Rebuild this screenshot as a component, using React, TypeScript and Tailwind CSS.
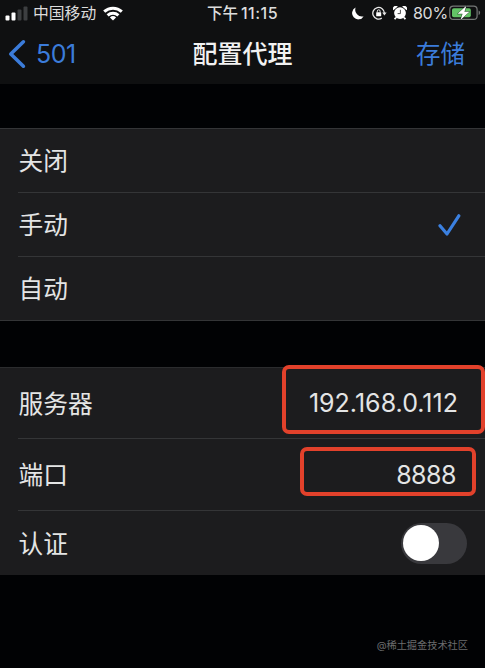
import type { ReactNode } from 'react';
import clsx from 'clsx';

const modes = ['关闭', '手动', '自动'];

function StatusBar() {
  return (
    <div className="relative flex h-[26px] items-center text-[15.5px] text-[#dcdcdc]">
      <svg className="ml-[5px] h-[15px] w-[23px]" viewBox="0 0 23 15">
        <rect x="0.5" y="9.5" width="4" height="5" rx="1" fill="#fff" />
        <rect x="6.5" y="6.5" width="4" height="8" rx="1" fill="#fff" />
        <rect x="12.5" y="3.5" width="4" height="11" rx="1" fill="#3d3f41" />
        <rect x="18.5" y="0.5" width="4" height="14" rx="1" fill="#3d3f41" />
      </svg>
      <span className="ml-[5px] pt-[2px] text-[15.8px] leading-none">中国移动</span>
      <svg className="ml-[7px] h-[15px] w-5" viewBox="0 0 20 15" fill="none" stroke="#fff" strokeWidth="3">
        <path d="M1.2 5.7a12.8 12.8 0 0 1 17.6 0" />
        <path d="M4.6 9.3a8 8 0 0 1 10.8 0" />
        <path d="M10 14.6 6.9 11.5a4.5 4.5 0 0 1 6.2 0z" fill="#fff" stroke="none" />
      </svg>

      <div className="absolute inset-x-0 flex items-center justify-center gap-[3px] leading-none font-medium">
        <span className="pt-[2px]">下午</span>
        <span className="text-base tracking-[0.5px]">11:15</span>
      </div>

      <div className="ml-auto flex items-center">
        <svg className="h-[13px] w-[13px]" viewBox="0 0 13 13" fill="#fff">
          <path d="M4.6.6A6.2 6.2 0 1 0 12.6 9.4 6.8 6.8 0 0 1 4.6.6z" />
        </svg>
        <svg className="ml-2 h-3.5 w-[15px]" viewBox="0 0 15 14" fill="none" stroke="#e8e8e8" strokeWidth="1.3">
          <path d="M9.8 12.1A5.8 5.8 0 1 1 12.4 7" />
          <path d="M10.2 6.4h4.4l-2.2 3z" fill="#e8e8e8" stroke="none" />
          <rect x="4.2" y="6.2" width="5" height="4" rx="0.5" fill="#fff" stroke="none" />
          <path d="M5.3 6.5V5.2a1.4 1.4 0 0 1 2.8 0v1.3" strokeWidth="1" />
        </svg>
        <svg className="ml-[6px] h-3.5 w-3.5" viewBox="0 0 14 14">
          <path d="M.4 4.2A2.9 2.9 0 0 1 4.8.5zM13.6 4.2A2.9 2.9 0 0 0 9.2.5z" fill="#fff" />
          <circle cx="7" cy="7.1" r="5.9" fill="#fff" />
          <path d="m3 11.5-1.4 1.8M11 11.5l1.4 1.8" stroke="#fff" strokeWidth="1.8" />
          <path d="M7.4 3.8v3.8H4.6" fill="none" stroke="#3a3a3a" strokeWidth="0.9" />
        </svg>
        <span className="ml-[6px] w-[34px] text-[16px] leading-none tracking-[-0.3px] whitespace-nowrap">80%</span>
        <svg className="mr-[4px] ml-[2px] h-4 w-[32px]" viewBox="0 0 32 16">
          <rect x="0.8" y="1.1" width="27.3" height="13.3" rx="3.5" fill="none" stroke="#757877" strokeWidth="1.2" />
          <rect x="3" y="3.2" width="18.8" height="9.1" rx="1.8" fill="#63c466" />
          <path d="M29.6 5.5v4.6q1.5-.5 1.5-2.3t-1.5-2.3z" fill="#757877" />
          <path
            d="M17.4.8 8.6 8.8h5L11.4 15l9-8.2h-5z"
            fill="#fff"
            stroke="#17231a"
            strokeWidth="0.8"
            paintOrder="stroke"
          />
        </svg>
      </div>
    </div>
  );
}

function NavBar() {
  return (
    <div className="relative flex h-14 items-center justify-between pr-5 pl-2 text-[#3b7cda]">
      <button className="flex items-center">
        <svg className="h-[30px] w-[19px]" viewBox="0 0 19 30" fill="none" stroke="currentColor" strokeWidth="3.6">
          <path d="M15.4 2.8 2.8 15l12.6 12.2" strokeLinecap="round" strokeLinejoin="round" />
        </svg>
        <span className="ml-[9px] text-[25px] leading-none tracking-[-0.5px]">501</span>
      </button>
      <h1 className="pointer-events-none absolute inset-x-0 pt-px text-center text-[25px] leading-none font-medium text-[#f2f2f2]">
        配置代理
      </h1>
      <button className="pt-px text-[24.5px] leading-none">存储</button>
    </div>
  );
}

function Row({ label, className, children }: { label: string; className: string; children?: ReactNode }) {
  return (
    <div className={clsx('ml-[18px] flex items-center justify-between', className)}>
      <span className="pt-[2px] pl-[0.5px] leading-none">{label}</span>
      {children}
    </div>
  );
}

export default function App() {
  return (
    <main className="h-[668px] w-[485px] overflow-hidden bg-[#010204] font-['Inter','Noto_Sans_CJK_SC',sans-serif] text-[24.7px] text-[#e4e5e5]">
      <header className="h-[84px] bg-[#0f1011]">
        <StatusBar />
        <NavBar />
      </header>

      <section className="mt-11 border-y border-[#343537] bg-[#1c1c1e]">
        {modes.map((mode, i) => (
          <Row
            key={mode}
            label={mode}
            className={clsx(i === 0 ? 'h-[63px]' : 'h-16 border-t border-[#343537]')}
          >
            {mode === '手动' && (
              <svg className="mr-6 h-6 w-[23px]" viewBox="0 0 23 24" fill="none" stroke="#3b80e0" strokeWidth="3.2">
                <path d="m2 12.8 7 8.2L20.8 2.8" strokeLinecap="round" strokeLinejoin="round" />
              </svg>
            )}
          </Row>
        ))}
      </section>

      <section className="mt-[46px] border-t border-[#2b2c2e] bg-[#1c1c1e]">
        <Row label="服务器" className="h-[70px]">
          <div className="-mt-[7px] flex h-[69px] w-[203px] items-center justify-end rounded-[7px] border-4 border-[#e2412b] pt-[7px] pr-[23px]">
            <span className="text-[25px] leading-none tracking-[0.02px]">192.168.0.112</span>
          </div>
        </Row>
        <Row label="端口" className="h-[72px] border-t border-[#343537]">
          <div className="mr-[9px] -mt-[7px] flex h-[49px] w-[176px] items-center justify-end rounded-[7px] border-4 border-[#e2412b] pt-[8px] pr-4">
            <span className="text-[25px] leading-none tracking-[-0.5px]">8888</span>
          </div>
        </Row>
        <Row label="认证" className="h-[65px] border-t border-[#343537]">
          <button className="mr-[18px] flex h-[41px] w-[66px] items-center rounded-full bg-[#39393d] pl-[2px]">
            <span className="size-[36px] rounded-full bg-white" />
          </button>
        </Row>
      </section>

      <footer className="mt-[63px] mr-[17px] text-right text-[10.2px] leading-[14px] text-[#6b6c6d]">
        @稀土掘金技术社区
      </footer>
    </main>
  );
}
